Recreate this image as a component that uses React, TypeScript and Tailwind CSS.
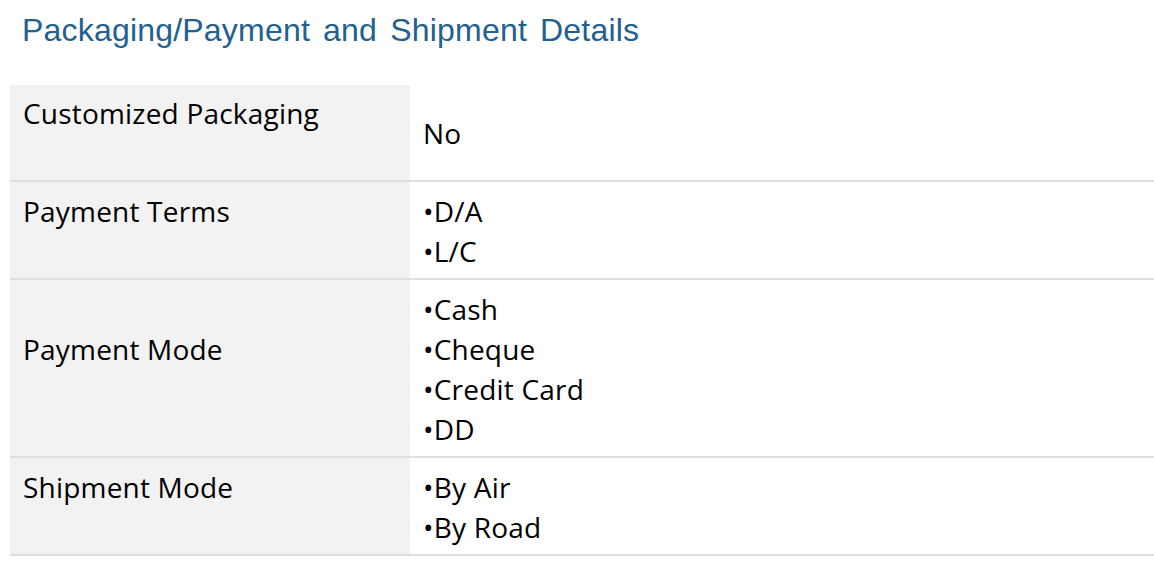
const rows: { label: string; items: string[]; bullet: boolean; h: string; labelPos: string; valuePt: string }[] = [
  { label: 'Customized Packaging', items: ['No'], bullet: false, h: 'h-[97px]', labelPos: 'pt-[8px]', valuePt: 'pt-[28px]' },
  { label: 'Payment Terms', items: ['D/A', 'L/C'], bullet: true, h: 'h-[98px]', labelPos: 'pt-[9px]', valuePt: 'pt-[9px]' },
  { label: 'Payment Mode', items: ['Cash', 'Cheque', 'Credit Card', 'DD'], bullet: true, h: 'h-[178px]', labelPos: 'pt-[49px]', valuePt: 'pt-[9px]' },
  { label: 'Shipment Mode', items: ['By Air', 'By Road'], bullet: true, h: 'h-[98px]', labelPos: 'pt-[9px]', valuePt: 'pt-[9px]' },
]

export default function App() {
  return (
    <div className="w-[1154px] h-[567px] bg-white overflow-hidden">
      <h1 className="pl-[22px] pt-[12px] h-[85px] text-[32px] leading-[36px] tracking-[0.2px] text-[#22608f] font-['Liberation_Sans',Arial,sans-serif] [word-spacing:4px]">
        Packaging/Payment and Shipment Details
      </h1>

      <div className="ml-[10px] font-['Open_Sans',sans-serif] text-[28px] leading-[40px] tracking-[0.2px] text-black">
        {rows.map(r => (
          <div key={r.label} className={`grid grid-cols-[400px_1fr] border-b-2 border-[#dedede] ${r.h}`}>
            <div className={`bg-[#f2f2f2] pl-[13px] ${r.labelPos}`}>{r.label}</div>
            <div className={`pl-[13px] ${r.valuePt}`}>
              {r.items.map(it => (
                <div key={it}>{r.bullet ? '•' : ''}{it}</div>
              ))}
            </div>
          </div>
        ))}
      </div>
    </div>
  )
}
